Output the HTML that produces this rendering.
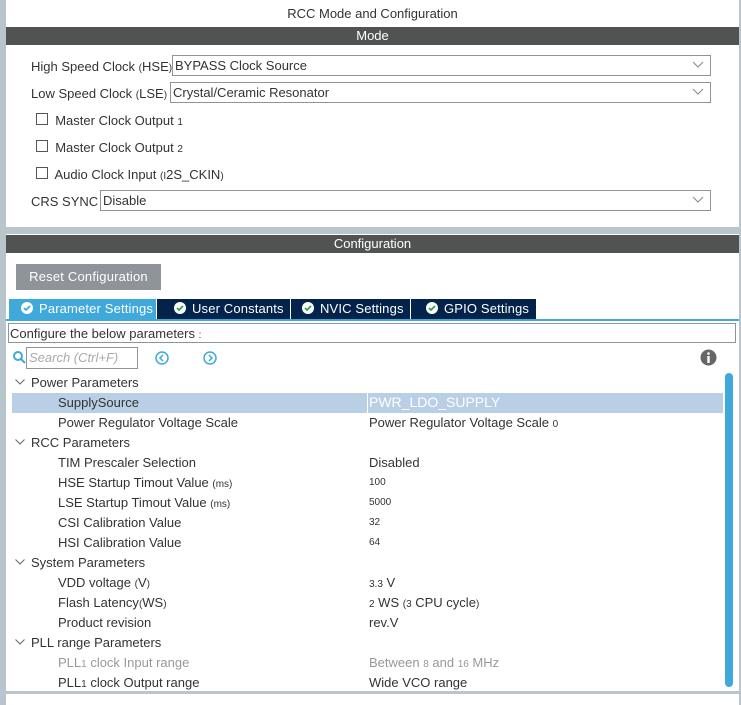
<!DOCTYPE html><html><head><style>
*{margin:0;padding:0;box-sizing:border-box}
body{width:741px;height:705px;background:#fff;font-family:"Liberation Sans",sans-serif;font-size:13px;color:#333;position:relative;overflow:hidden}
.a{position:absolute}
.grey{background:#b9c5cc}
.hdr{background:#505352;color:#fff;text-align:center;font-size:13px;line-height:18px}
.sel{border:1px solid #8e9499;background:#fff;height:21px;line-height:19px;padding-left:2px}
.chev{position:absolute;right:6px;top:5px}
.cb{width:12px;height:12px;border:1px solid #555;background:#fff;display:inline-block}
.row{position:absolute;left:12px;width:711px;height:20px;line-height:21px}
.row .n{position:absolute;left:46px}
.row .v{position:absolute;left:357px}
.grp .n{left:19px}
.s{font-size:10px}
.tab{position:absolute;top:299px;height:20px;line-height:20px;color:#fff;background:#03234b;font-size:13px;letter-spacing:0.15px;white-space:nowrap;overflow:hidden}
.tick{display:inline-block;width:12px;height:12px;vertical-align:-1px;margin-right:6px}
</style></head><body>
<div class="a grey" style="left:0;top:0;width:6px;height:705px"></div>
<div class="a grey" style="left:739px;top:0;width:2px;height:705px"></div>
<div class="a grey" style="left:0;top:227px;width:741px;height:7px"></div>
<div class="a grey" style="left:0;top:691px;width:741px;height:3px"></div>
<div class="a" style="left:6px;top:6px;width:733px;text-align:center;font-size:13px">RCC Mode and Configuration</div>
<div class="a hdr" style="left:6px;top:27px;width:733px">Mode</div>
<div class="a" style="left:31px;top:59px">High Speed Clock <span class="s">(</span>HSE<span class="s">)</span></div>
<div class="a sel" style="left:172px;top:55px;width:539px">BYPASS Clock Source<svg class="chev" width="12" height="8"><path d="M1 1l5 5 5-5" stroke="#888" fill="none"/></svg></div>
<div class="a" style="left:31px;top:86px">Low Speed Clock <span class="s">(</span>LSE<span class="s">)</span></div>
<div class="a sel" style="left:170px;top:82px;width:541px">Crystal/Ceramic Resonator<svg class="chev" width="12" height="8"><path d="M1 1l5 5 5-5" stroke="#888" fill="none"/></svg></div>
<div class="a" style="left:36px;top:113px"><span class="cb"></span>&nbsp; Master Clock Output <span class="s">1</span></div>
<div class="a" style="left:36px;top:140px"><span class="cb"></span>&nbsp; Master Clock Output <span class="s">2</span></div>
<div class="a" style="left:36px;top:167px"><span class="cb"></span>&nbsp; Audio Clock Input <span class="s">(I</span>2S_CKIN<span class="s">)</span></div>
<div class="a" style="left:31px;top:194px">CRS SYNC</div>
<div class="a sel" style="left:100px;top:190px;width:611px">Disable<svg class="chev" width="12" height="8"><path d="M1 1l5 5 5-5" stroke="#888" fill="none"/></svg></div>
<div class="a hdr" style="left:6px;top:235px;width:733px">Configuration</div>
<div class="a" style="left:16px;top:264px;width:145px;height:26px;background:#8e9499;color:#fff;line-height:26px;text-align:center;letter-spacing:0.2px">Reset Configuration</div>
<div class="tab" style="left:9px;width:147px;background:#3fa9dc;padding-left:12px"><svg class="tick"><circle cx="6" cy="6" r="6" fill="#fff"/><path d="M3 6l2 2 4-4" stroke="#3fa9dc" stroke-width="1.8" fill="none"/></svg>Parameter Settings</div>
<div class="tab" style="left:157px;width:133px;padding-left:17px"><svg class="tick"><circle cx="6" cy="6" r="6" fill="#fff"/><path d="M3 6l2 2 4-4" stroke="#2ca84a" stroke-width="1.8" fill="none"/></svg>User Constants</div>
<div class="tab" style="left:291px;width:119px;padding-left:11px"><svg class="tick"><circle cx="6" cy="6" r="6" fill="#fff"/><path d="M3 6l2 2 4-4" stroke="#2ca84a" stroke-width="1.8" fill="none"/></svg>NVIC Settings</div>
<div class="tab" style="left:411px;width:125px;padding-left:15px"><svg class="tick"><circle cx="6" cy="6" r="6" fill="#fff"/><path d="M3 6l2 2 4-4" stroke="#2ca84a" stroke-width="1.8" fill="none"/></svg>GPIO Settings</div>
<div class="a" style="left:6px;top:319px;width:733px;height:2px;background:#3fa9dc"></div>
<div class="a" style="left:8px;top:323px;width:728px;height:20px;border:1px solid #8e9499;line-height:19px;padding-left:1px">Configure the below parameters <span class="s">:</span></div>
<svg class="a" style="left:13px;top:351px" width="13" height="13"><circle cx="5" cy="5" r="4" stroke="#3fa9dc" stroke-width="2" fill="none"/><path d="M8 8l4 4" stroke="#3fa9dc" stroke-width="2"/></svg>
<div class="a" style="left:26px;top:347px;width:112px;height:22px;border:1px solid #8e9499;color:#aaa;font-style:italic;line-height:20px;padding-left:2px">Search (Ctrl+F)</div>
<svg class="a" style="left:155px;top:351px" width="14" height="14"><circle cx="7" cy="7" r="6" stroke="#3fa9dc" stroke-width="1.5" fill="none"/><path d="M8 4l-3 3 3 3" stroke="#3fa9dc" stroke-width="1.5" fill="none"/></svg>
<svg class="a" style="left:203px;top:351px" width="14" height="14"><circle cx="7" cy="7" r="6" stroke="#3fa9dc" stroke-width="1.5" fill="none"/><path d="M6 4l3 3-3 3" stroke="#3fa9dc" stroke-width="1.5" fill="none"/></svg>
<svg class="a" style="left:700px;top:349px" width="17" height="17"><circle cx="8.5" cy="8.5" r="8" fill="#666"/><circle cx="8.5" cy="4.5" r="1.3" fill="#fff"/><rect x="7.3" y="7" width="2.4" height="7" fill="#fff"/></svg>
<div class="a" style="left:725px;top:373px;width:8px;height:314px;background:#3fa9dc;border-radius:4px"></div>
<div class="row" style="top:393px;background:#b8cfe5;height:20px"></div>
<div class="a" style="left:367px;top:393px;width:1px;height:20px;background:#fff"></div>
<div class="a" style="left:0;top:372px;width:723px">
<div class="row grp" style="top:0"><svg class="a" style="left:3px;top:7px" width="10" height="6"><path d="M0.5 0.5l4.5 4.5 4.5-4.5" stroke="#666" fill="none"/></svg><span class="n">Power Parameters</span></div>
<div class="row" style="top:20px"><span class="n">SupplySource</span><span class="v" style="color:#fff;font-size:14px">PWR_LDO_SUPPLY</span></div>
<div class="row" style="top:40px"><span class="n">Power Regulator Voltage Scale</span><span class="v">Power Regulator Voltage Scale <span class="s">0</span></span></div>
<div class="row grp" style="top:60px"><svg class="a" style="left:3px;top:7px" width="10" height="6"><path d="M0.5 0.5l4.5 4.5 4.5-4.5" stroke="#666" fill="none"/></svg><span class="n">RCC Parameters</span></div>
<div class="row" style="top:80px"><span class="n">TIM Prescaler Selection</span><span class="v">Disabled</span></div>
<div class="row" style="top:100px"><span class="n">HSE Startup Timout Value <span class="s">(ms)</span></span><span class="v s">100</span></div>
<div class="row" style="top:120px"><span class="n">LSE Startup Timout Value <span class="s">(ms)</span></span><span class="v s">5000</span></div>
<div class="row" style="top:140px"><span class="n">CSI Calibration Value</span><span class="v s">32</span></div>
<div class="row" style="top:160px"><span class="n">HSI Calibration Value</span><span class="v s">64</span></div>
<div class="row grp" style="top:180px"><svg class="a" style="left:3px;top:7px" width="10" height="6"><path d="M0.5 0.5l4.5 4.5 4.5-4.5" stroke="#666" fill="none"/></svg><span class="n">System Parameters</span></div>
<div class="row" style="top:200px"><span class="n">VDD voltage <span class="s">(</span>V<span class="s">)</span></span><span class="v"><span class="s">3.3</span> V</span></div>
<div class="row" style="top:220px"><span class="n">Flash Latency<span class="s">(</span>WS<span class="s">)</span></span><span class="v"><span class="s">2</span> WS <span class="s">(3</span> CPU cycle<span class="s">)</span></span></div>
<div class="row" style="top:240px"><span class="n">Product revision</span><span class="v">rev.V</span></div>
<div class="row grp" style="top:260px"><svg class="a" style="left:3px;top:7px" width="10" height="6"><path d="M0.5 0.5l4.5 4.5 4.5-4.5" stroke="#666" fill="none"/></svg><span class="n">PLL range Parameters</span></div>
<div class="row" style="top:280px;color:#999"><span class="n">PLL<span class="s">1</span> clock Input range</span><span class="v">Between <span class="s">8</span> and <span class="s">16</span> MHz</span></div>
<div class="row" style="top:300px"><span class="n">PLL<span class="s">1</span> clock Output range</span><span class="v">Wide VCO range</span></div>
</div>
</body></html>
